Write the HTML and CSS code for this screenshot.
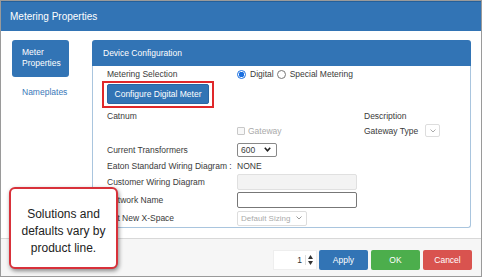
FILE: index.html
```html
<!DOCTYPE html>
<html lang="en">
<head>
  <meta charset="UTF-8">
  <title>Metering Properties</title>
  <link rel="stylesheet" href="styles.css">
</head>
<body>

<div class="window">
  <header class="titlebar">Metering Properties</header>

  <div class="content">
    <nav class="sidenav">
      <a class="nav-btn active" href="#">Meter<br>Properties</a>
      <a class="nav-link" href="#">Nameplates</a>
    </nav>

    <section class="panel">
      <div class="panel-head">Device Configuration</div>
      <div class="panel-body">
        <div class="row r1">
          <span class="label">Metering Selection</span>
          <span class="value radios">
            <span class="radio checked"></span><span>Digital</span>
            <span class="radio"></span><span>Special Metering</span>
          </span>
        </div>

        <div class="highlight">
          <button class="btn-config">Configure Digital Meter</button>
        </div>

        <div class="row r3">
          <span class="label">Catnum</span>
          <span class="value"></span>
          <span class="extra">Description</span>
        </div>

        <div class="row r4">
          <span class="label"></span>
          <span class="value check-wrap"><span class="check"></span><span class="muted">Gateway</span></span>
          <span class="extra">Gateway Type <span class="select tiny disabled"><svg width="6" height="4" viewBox="0 0 6 4"><path d="M0.5 0.5 L3 3 L5.5 0.5" fill="none" stroke="#aaa" stroke-width="1"/></svg></span></span>
        </div>

        <div class="row r5">
          <span class="label">Current Transformers</span>
          <span class="value"><span class="select ct">600<svg width="7" height="5" viewBox="0 0 7 5"><path d="M0.8 0.8 L3.5 3.8 L6.2 0.8" fill="none" stroke="#222" stroke-width="1.6"/></svg></span></span>
        </div>

        <div class="row r6">
          <span class="label">Eaton Standard Wiring Diagram :</span>
          <span class="value">NONE</span>
        </div>

        <div class="row r7">
          <span class="label">Customer Wiring Diagram</span>
          <span class="value"><span class="input disabled"></span></span>
        </div>

        <div class="row r8">
          <span class="label">Network Name</span>
          <span class="value"><span class="input"></span></span>
        </div>

        <div class="row r9">
          <span class="label">Set New X-Space</span>
          <span class="value"><span class="select sizing disabled">Default Sizing<svg width="6" height="4" viewBox="0 0 6 4"><path d="M0.5 0.5 L3 3 L5.5 0.5" fill="none" stroke="#999" stroke-width="1"/></svg></span></span>
        </div>
      </div>
    </section>
  </div>

  <footer class="footer">
    <div class="spinner">
      <span class="spin-val">1</span>
      <span class="spin-arrows">
        <svg width="5" height="4" viewBox="0 0 5 4"><path d="M0 4 L2.5 0 L5 4 Z" fill="#333"/></svg>
        <svg width="5" height="4" viewBox="0 0 5 4"><path d="M0 0 L2.5 4 L5 0 Z" fill="#333"/></svg>
      </span>
    </div>
    <button class="btn btn-apply">Apply</button>
    <button class="btn btn-ok">OK</button>
    <button class="btn btn-cancel">Cancel</button>
  </footer>

  <div class="callout">Solutions and defaults vary by product line.</div>
</div>

</body>
</html>
```

FILE: styles.css
```css
/* General */
body {
  margin: 0;
  font-family: "Liberation Sans", Arial, sans-serif;
  color: #333;
  background: #fff;
}
.window {
  position: relative;
  width: 482px;
  height: 277px;
  box-sizing: border-box;
  border: 1px solid #9a9a9a;
  display: flex;
  flex-direction: column;
  background: #fff;
}
.titlebar {
  height: 30px;
  background: #3274b5;
  border-top: 1px solid #25609a;
  box-sizing: border-box;
  color: #fff;
  font-size: 10px;
  line-height: 29px;
  padding-left: 9px;
}

/* Content */
.content {
  display: flex;
  height: 207px;
  padding: 9px 10px 0 11px;
  box-sizing: border-box;
}
.sidenav {
  width: 57px;
  display: flex;
  flex-direction: column;
  margin-right: 23px;
}
.nav-btn {
  height: 37px;
  box-sizing: border-box;
  background: #3274b5;
  border-radius: 3px;
  color: #fff;
  text-decoration: none;
  font-size: 8.5px;
  line-height: 11px;
  padding: 7px 0 0 10px;
}
.nav-link {
  margin-top: 10px;
  padding-left: 10px;
  font-size: 8.5px;
  line-height: 11px;
  color: #3a78b8;
  text-decoration: none;
}

/* Panel */
.panel {
  flex: 1;
  font-size: 8.5px;
}
.panel-head {
  height: 26px;
  background: #3274b5;
  border-radius: 3px 3px 0 0;
  color: #fff;
  line-height: 26px;
  padding-left: 11px;
}
.panel-body {
  border: 1px solid #a9c5de;
  border-top: none;
  border-radius: 0 0 3px 3px;
  padding: 1px 0 2px 14px;
  color: #3a3a3a;
}
.row {
  display: flex;
  align-items: center;
}
.label {
  width: 130px;
  flex-shrink: 0;
}
.value {
  width: 127px;
  flex-shrink: 0;
  display: flex;
  align-items: center;
}
.extra {
  display: flex;
  align-items: center;
}
.r1 { height: 14px; }
.r3 { height: 16px; }
.r4 { height: 13px; }
.r5 { height: 17px; margin-top: 4px; }
.r6 { height: 16px; }
.r7 { height: 16px; }
.r8 { height: 16px; margin-top: 2px; }
.r9 { height: 14px; margin-top: 3px; }

/* Radios and checkbox */
.radios span:not(.radio) {
  margin-right: 3px;
}
.radio {
  width: 9px;
  height: 9px;
  box-sizing: border-box;
  border: 1px solid #777;
  border-radius: 50%;
  margin-right: 4px;
  background: #fff;
}
.radio.checked {
  border: 1px solid #1a6fe0;
  background: radial-gradient(circle, #1a6fe0 0 2.6px, #fff 3px);
}
.check {
  width: 8px;
  height: 8px;
  box-sizing: border-box;
  border: 1px solid #c8c8c8;
  border-radius: 1px;
  margin-right: 3px;
  background: #f8f8f8;
}
.muted {
  color: #aaa;
}

/* Highlighted button */
.highlight {
  display: inline-block;
  margin-left: -5px;
  border: 2px solid #e0282a;
  padding: 1px 3px 2px 3px;
}
.btn-config {
  display: block;
  width: 102px;
  height: 20px;
  border: 1px solid #2a66a3;
  border-radius: 2px;
  background: #3274b5;
  color: #fff;
  font-family: inherit;
  font-size: 8.5px;
  padding: 0;
}

/* Fake form controls */
.select {
  display: flex;
  align-items: center;
  justify-content: space-between;
  box-sizing: border-box;
  border: 1px solid #888;
  border-radius: 2px;
  background: #fff;
}
.select.ct {
  width: 40px;
  height: 14px;
  padding: 0 5px 0 3px;
}
.select.tiny {
  width: 15px;
  height: 13px;
  margin-left: 7px;
  justify-content: center;
}
.select.sizing {
  width: 70px;
  height: 15px;
  padding: 0 4px 0 3px;
  font-size: 8px;
}
.select.disabled {
  border-color: #ddd;
  color: #aaa;
}
.input {
  display: block;
  width: 120px;
  height: 16px;
  box-sizing: border-box;
  border: 1px solid #777;
  border-radius: 2px;
  background: #fff;
}
.input.disabled {
  border-color: #e0e0e0;
  background: #f3f3f3;
}

/* Footer */
.footer {
  flex: 1;
  display: flex;
  justify-content: flex-end;
  align-items: flex-start;
  gap: 3px;
  padding: 11px 9px 0 0;
  border-top: 1px solid #d8d8d8;
  background: #f6f6f6;
}
.spinner {
  width: 44px;
  height: 20px;
  box-sizing: border-box;
  background: #fff;
  border: 1px solid #eee;
  display: flex;
  align-items: center;
  justify-content: flex-end;
  font-size: 8.5px;
  margin-right: -1px;
}
.spin-val {
  margin-right: 3px;
}
.spin-arrows {
  display: flex;
  flex-direction: column;
  gap: 2px;
  padding: 0 3px 0 2px;
  border-left: 1px solid #ddd;
}
.spin-arrows svg {
  display: block;
}
.btn {
  width: 49px;
  height: 20px;
  border: none;
  border-radius: 2px;
  color: #fff;
  font-family: inherit;
  font-size: 8.5px;
  padding: 0;
}
.btn-apply { background: #3274b5; }
.btn-ok { background: #4cae4c; }
.btn-cancel { background: #d9534f; }

/* Callout tooltip */
.callout {
  position: absolute;
  left: 8px;
  top: 186px;
  width: 109px;
  height: 82px;
  box-sizing: border-box;
  border: 2px solid #d8313a;
  border-radius: 6px;
  background: #fff;
  box-shadow: 1px 2px 4px rgba(0, 0, 0, 0.45);
  padding: 17px 8px 0;
  text-align: center;
  font-size: 12px;
  line-height: 17px;
  color: #222;
}
```
